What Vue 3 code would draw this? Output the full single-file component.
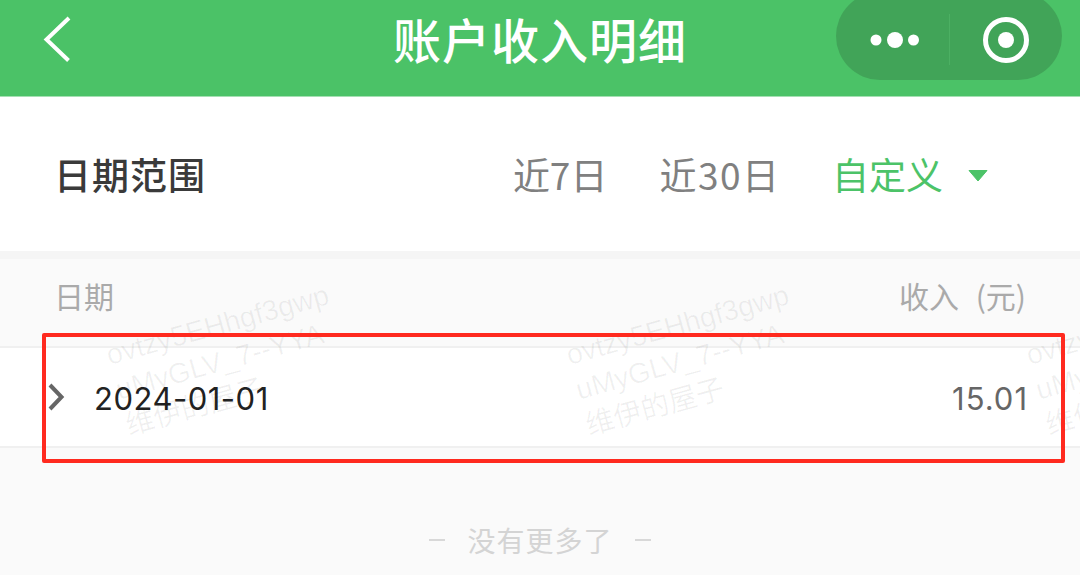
<script setup>
const marks = [102, 562, 1022]
</script>

<template>
  <div class="page">
    <header class="nav">
      <svg class="back" width="40" height="60" viewBox="0 0 40 60" aria-hidden="true">
        <path d="M29 8 L6.500 29.500 L28.500 50.500" fill="none" stroke="#fff" stroke-width="4" />
      </svg>
      <h1 class="title">账户收入明细</h1>
      <div class="capsule">
        <svg class="dots" width="64" height="24" viewBox="0 0 64 24" aria-hidden="true">
          <circle cx="13" cy="12" r="5.500" fill="#fff" />
          <circle cx="32" cy="12" r="8" fill="#fff" />
          <circle cx="50.500" cy="12" r="5.500" fill="#fff" />
        </svg>
        <span class="divider"></span>
        <svg class="target" width="48" height="48" viewBox="0 0 48 48" aria-hidden="true">
          <circle cx="24" cy="24" r="20.500" fill="none" stroke="#fff" stroke-width="5" />
          <circle cx="24" cy="24" r="8" fill="#fff" />
        </svg>
      </div>
    </header>

    <section class="filter">
      <span class="filter-label">日期范围</span>
      <div class="filter-options">
        <span class="opt opt-7">近7日</span>
        <span class="opt opt-30">近30日</span>
        <span class="opt active">自定义</span>
        <svg class="caret" width="20" height="13" viewBox="0 0 20 13" aria-hidden="true">
          <path d="M1 1.500 H19 L10 12 Z" fill="#4cc368" stroke="#4cc368" stroke-linejoin="round" />
        </svg>
      </div>
    </section>

    <div class="table-head">
      <span>日期</span>
      <span class="head-income">收入 (元)</span>
    </div>

    <div class="row">
      <svg class="row-arrow" width="20" height="30" viewBox="0 0 20 30" aria-hidden="true">
        <path d="M3 3 L14.500 15 L3 27" fill="none" stroke="#666" stroke-width="4" />
      </svg>
      <span class="row-date">2024-01-01</span>
      <span class="row-amount">15.01</span>
    </div>

    <div class="end-note">
      <span class="dash"></span>
      <span class="end-text">没有更多了</span>
      <span class="dash"></span>
    </div>

    <div
      v-for="x in marks"
      :key="x"
      class="watermark"
      :style="{ left: x + 'px' }"
    >
      <div>ovtzy5EHhgf3gwp</div>
      <div>uMyGLV_7--YYA</div>
      <div>维伊的屋子</div>
    </div>

    <div class="annotation"></div>
  </div>
</template>

<style>
html, body { margin: 0; background: #fafafa; }
</style>

<style scoped>
.page {
  position: relative;
  width: 1080px;
  height: 575px;
  overflow: hidden;
  background: #fafafa;
  font-family: "Noto Sans CJK SC", "Inter", sans-serif;
}
.nav {
  height: 96px;
  background: #4bc267;
  border-bottom: 1px solid #a5e0b3;
  display: grid;
  grid-template-columns: 1fr auto 1fr;
  align-items: start;
  overflow: hidden;
}
.back { justify-self: start; margin: 10px 0 0 40px; }
.title {
  margin: 0;
  height: 80px;
  font-size: 48px;
  line-height: 76px;
  font-weight: 500;
  letter-spacing: 1px;
  color: #fff;
  white-space: nowrap;
}
.capsule {
  justify-self: end;
  margin: -8px 18px 0 0;
  width: 226px;
  height: 88px;
  border-radius: 44px;
  background: #41a458;
  display: flex;
  align-items: center;
  box-sizing: border-box;
  padding: 7px 0 0 27px;
}
.dots { flex: none; }
.divider {
  width: 1px;
  height: 51px;
  margin-left: 22px;
  background: #4cb063;
}
.target { margin-left: 32px; flex: none; }
.filter {
  height: 154px;
  background: #fff;
  border-bottom: 8px solid #f5f5f5;
  display: flex;
  align-items: center;
  justify-content: space-between;
  padding: 0 92px 0 54px;
}
.filter-label {
  font-size: 37px;
  font-weight: 500;
  letter-spacing: 1px;
  color: #3a3a3a;
}
.filter-options { display: flex; align-items: center; }
.opt {
  font-size: 37px;
  color: #808080;
}
.opt-30 { margin-left: 52px; letter-spacing: 1.500px; }
.active { margin-left: 51.500px; color: #4cc368; }
.caret { margin-left: 25px; margin-top: 2px; }
.table-head {
  height: 87px;
  display: flex;
  align-items: center;
  justify-content: space-between;
  padding: 0 54px 15px 54px;
  font-size: 30px;
  color: #aaa;
  box-sizing: border-box;
}
.head-income { word-spacing: 10px; }
.row {
  height: 102px;
  box-sizing: border-box;
  background: #fff;
  border-top: 2px solid #f0f0f0;
  border-bottom: 2px solid #f0f0f0;
  display: flex;
  align-items: center;
  padding: 0 52px 0 47px;
}
.row-arrow { flex: none; }
.row-date {
  margin-left: 27px;
  padding-top: 3px;
  font-family: "Inter", sans-serif;
  font-size: 31px;
  letter-spacing: 0.500px;
  color: #222;
}
.row-amount {
  margin-left: auto;
  padding-top: 3px;
  font-family: "Inter", sans-serif;
  font-size: 31px;
  letter-spacing: 1px;
  color: #666;
}
.end-note {
  margin-top: 72px;
  display: flex;
  align-items: center;
  justify-content: center;
  gap: 22px;
  height: 40px;
}
.end-text {
  font-size: 28px;
  letter-spacing: 1px;
  color: #d4d4d4;
}
.dash {
  width: 16px;
  height: 2px;
  background: #d8d8d8;
}
.watermark {
  position: absolute;
  top: 338px;
  width: 240px;
  transform: rotate(-15.500deg);
  transform-origin: left top;
  font-family: "Liberation Sans", "Noto Sans CJK SC", sans-serif;
  font-size: 28.500px;
  line-height: 36.400px;
  color: rgba(0, 0, 0, 0.06);
  white-space: nowrap;
  pointer-events: none;
}
.annotation {
  position: absolute;
  left: 42px;
  top: 333px;
  width: 1023px;
  height: 130px;
  box-sizing: border-box;
  border: 4px solid #ff2a1f;
  border-radius: 2px;
  pointer-events: none;
}
</style>
